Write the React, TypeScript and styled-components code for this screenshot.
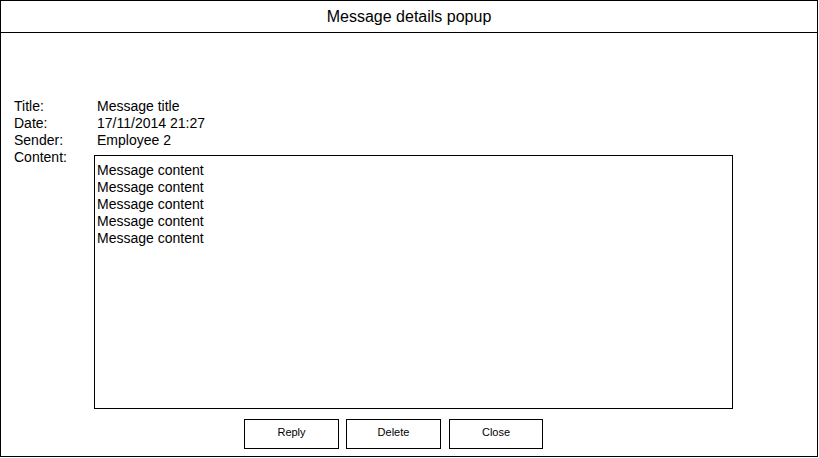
import React from "react";
import styled, { createGlobalStyle } from "styled-components";

const Global = createGlobalStyle`
  html, body { margin: 0; padding: 0; background: #fff; }
  body { font-family: "Liberation Sans", Arial, Helvetica, sans-serif; color: #000; }
`;

const Frame = styled.div`
  box-sizing: border-box;
  width: 818px;
  height: 457px;
  border: 1px solid #000;
  display: flex;
  flex-direction: column;
`;

const Header = styled.div`
  box-sizing: border-box;
  height: 32px;
  padding-top: 1px;
  border-bottom: 1px solid #000;
  display: flex;
  align-items: center;
  justify-content: center;
  font-size: 16px;
`;

const Body = styled.div`
  padding: 65px 0 0 13px;
  display: flex;
  flex-direction: column;
`;

const Row = styled.div`
  display: grid;
  grid-template-columns: 80px 1fr;
  font-size: 14px;
  line-height: 17px;
  height: 17px;
`;

const Label = styled.div``;

const Value = styled.div`
  padding-left: 3px;
`;

const ContentRow = styled.div`
  display: grid;
  grid-template-columns: 80px 639px;
  font-size: 14px;
  line-height: 17px;
`;

const ContentBox = styled.div`
  box-sizing: border-box;
  margin-top: 6px;
  height: 254px;
  border: 1px solid #000;
  padding: 6px 2px;
`;

const Buttons = styled.div`
  display: flex;
  gap: 7px;
  padding-left: 230px;
  margin-top: 10px;
`;

const Button = styled.button<{ $w?: number; $ml?: number }>`
  box-sizing: border-box;
  width: ${(p) => p.$w ?? 95}px;
  margin: 0 0 0 ${(p) => p.$ml ?? 0}px;
  height: 30px;
  background: #fff;
  border: 1px solid #000;
  border-radius: 0;
  font-family: "Liberation Sans", Arial, sans-serif;
  font-size: 11px;
  color: #000;
  padding: 0 0 4px;
`;

const lines = Array.from({ length: 5 }, () => "Message content");

export default function App() {
  return (
    <>
      <Global />
      <Frame>
        <Header>Message details popup</Header>
        <Body>
          <Row>
            <Label>Title:</Label>
            <Value>Message title</Value>
          </Row>
          <Row>
            <Label>Date:</Label>
            <Value>17/11/2014 21:27</Value>
          </Row>
          <Row>
            <Label>Sender:</Label>
            <Value>Employee 2</Value>
          </Row>
          <ContentRow>
            <Label>Content:</Label>
            <ContentBox>
              {lines.map((l, i) => (
                <div key={i}>{l}</div>
              ))}
            </ContentBox>
          </ContentRow>
          <Buttons>
            <Button>Reply</Button>
            <Button>Delete</Button>
            <Button $w={94} $ml={1}>Close</Button>
          </Buttons>
        </Body>
      </Frame>
    </>
  );
}
